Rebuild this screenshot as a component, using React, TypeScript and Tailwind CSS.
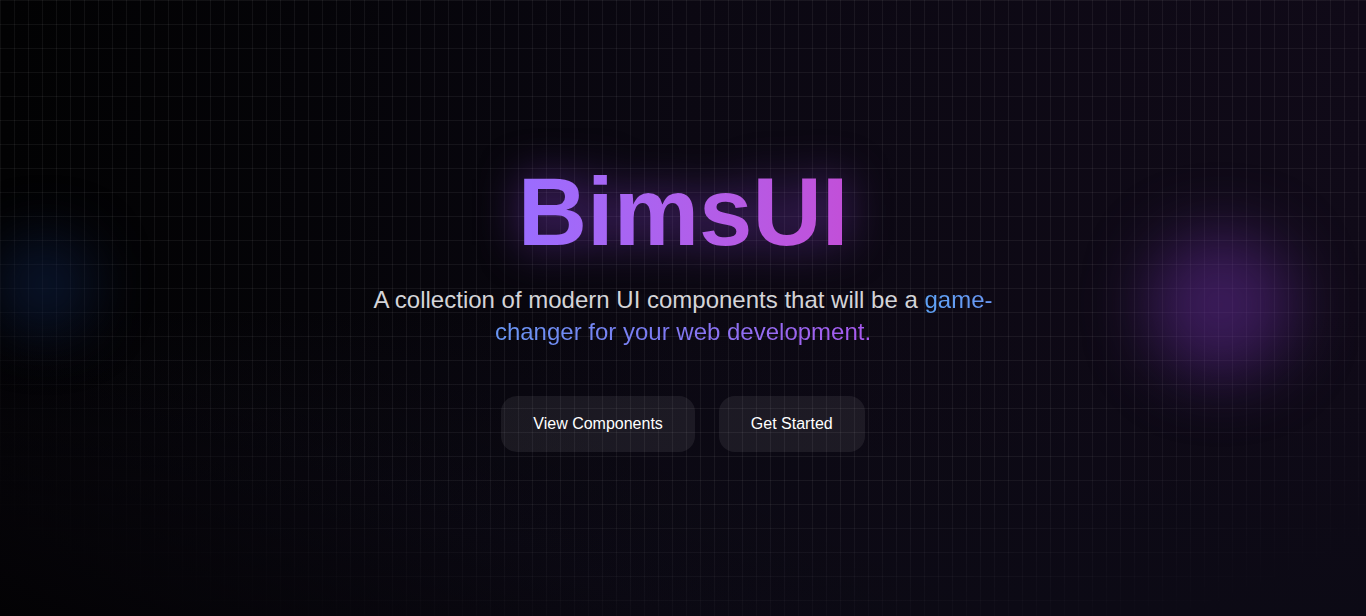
export default function App() {
  return (
    <div
      className="relative flex h-[616px] w-full items-center justify-center overflow-hidden bg-gradient-to-r from-[#020203] via-[#0b0812] to-[#100a18]"
      style={{ fontFamily: '"Liberation Sans", Arial, sans-serif' }}
    >
      {/* bottom tint */}
      <div className="pointer-events-none absolute inset-0 bg-gradient-to-b from-transparent via-transparent via-50% to-[#0c0a15]" />

      {/* grid */}
      <div className="pointer-events-none absolute inset-0 bg-[linear-gradient(to_right,rgba(255,255,255,0.06)_1px,transparent_1px),linear-gradient(to_bottom,rgba(255,255,255,0.06)_1px,transparent_1px)] bg-[size:14px_24px] [mask-image:radial-gradient(ellipse_75%_95%_at_50%_20%,black_65%,transparent_100%)]" />

      {/* darker corner bottom-left */}
      <div className="pointer-events-none absolute inset-0 bg-gradient-to-tr from-[#030204] via-[#030204]/10 via-25% to-transparent to-40%" />

      {/* glows */}
      <div className="pointer-events-none absolute left-[-5px] top-[235px] h-[100px] w-[100px] rounded-full bg-[#102450]/50 blur-[28px]" />
      <div className="pointer-events-none absolute left-[1148px] top-[232px] h-[145px] w-[145px] rounded-full bg-[#5e2a90]/55 blur-[32px]" />

      <div className="relative flex flex-col items-center text-center">
        <h1 className="bg-gradient-to-r from-[#9a6dff] to-[#c24fd8] bg-clip-text text-[96px] font-bold leading-none text-transparent drop-shadow-[0_0_22px_rgba(150,70,230,0.55)]">
          BimsUI
        </h1>
        <p className="mt-6 max-w-[672px] text-2xl leading-8 text-[#d4d4d8]">
          A collection of modern UI components that will be a{" "}
          <span className="bg-gradient-to-r from-[#5ea2f5] via-[#7a7cf3] to-[#a958f0] bg-clip-text text-transparent">
            game-changer for your web development.
          </span>
        </p>
        <div className="mt-12 flex gap-6">
          <button className="rounded-2xl bg-white/[0.07] px-8 py-4 text-base leading-6 text-white">
            View Components
          </button>
          <button className="rounded-2xl bg-white/[0.07] px-8 py-4 text-base leading-6 text-white">
            Get Started
          </button>
        </div>
      </div>
    </div>
  );
}
